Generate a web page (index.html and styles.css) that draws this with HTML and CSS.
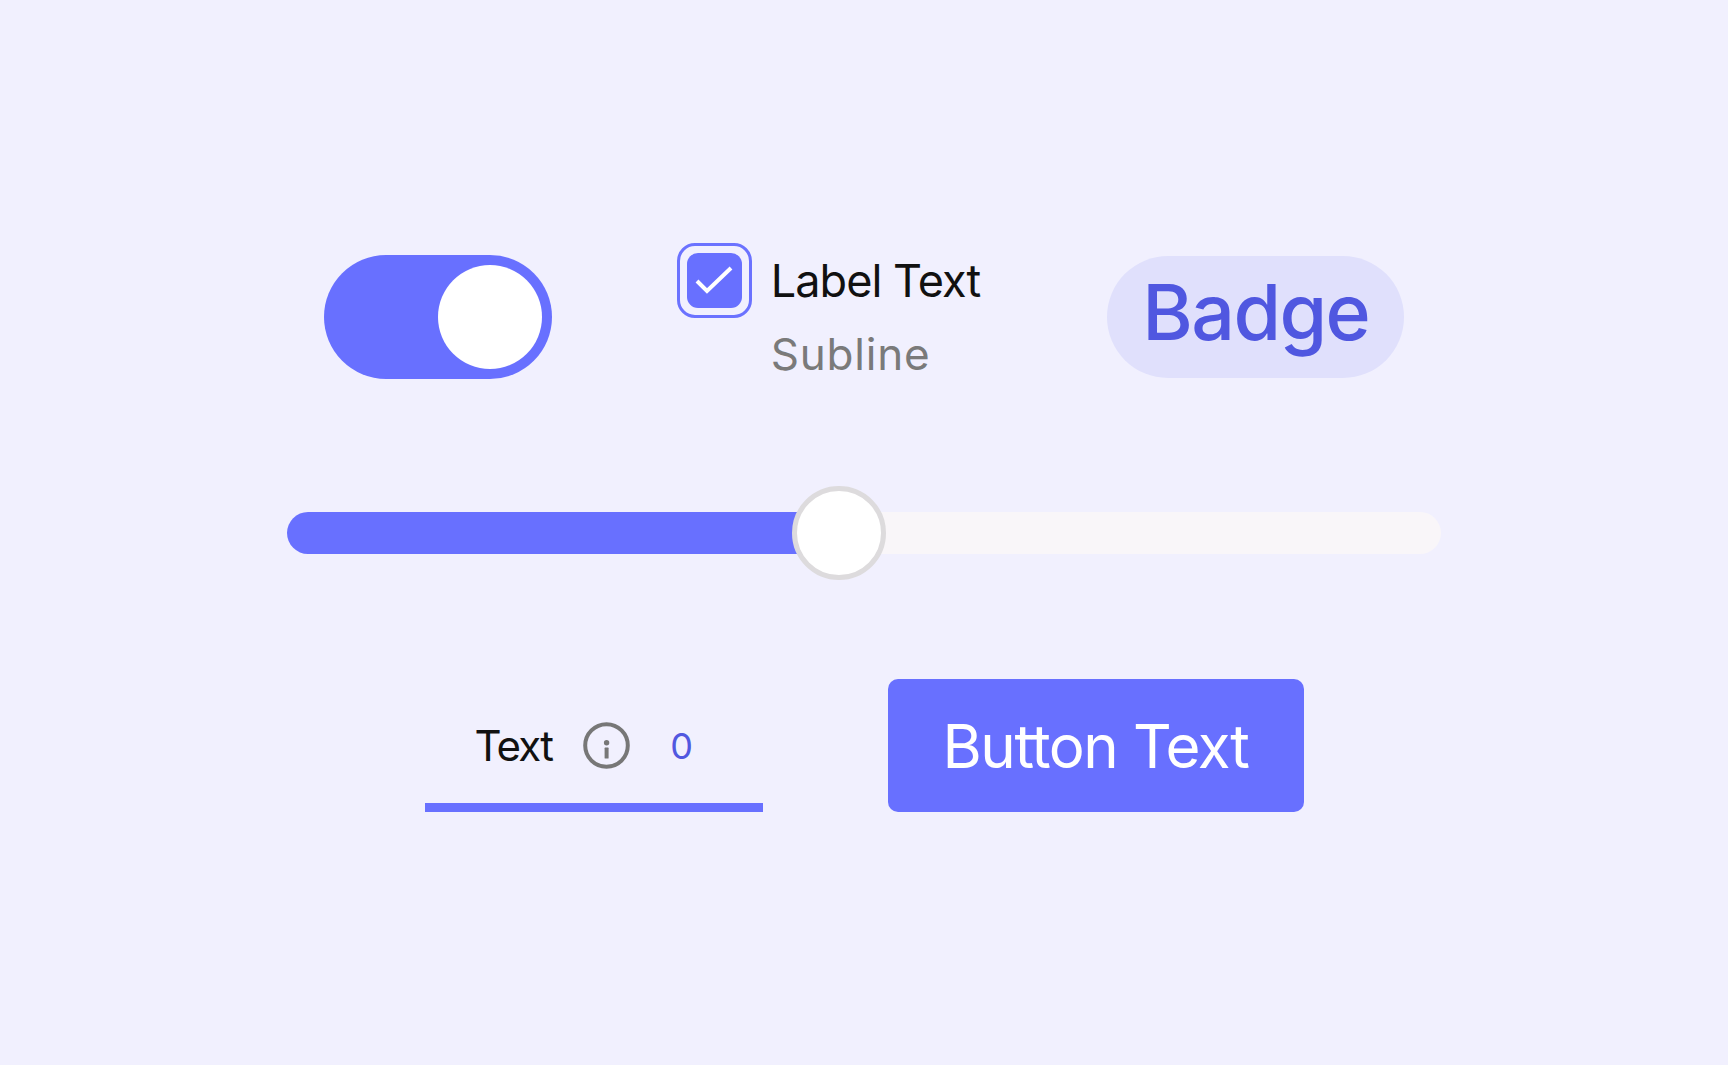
FILE: index.html
```html
<!DOCTYPE html>
<html lang="en">
<head>
<meta charset="utf-8">
<title>Components</title>
<link rel="stylesheet" href="styles.css">
</head>
<body>
<main class="stage">
  <section class="row row-top">
    <div class="toggle" role="switch" aria-checked="true">
      <span class="toggle-knob"></span>
    </div>
    <div class="check-group">
      <span class="checkbox">
        <span class="checkbox-box">
          <svg viewBox="0 0 55 55" width="55" height="55" aria-hidden="true">
            <polyline points="10,28 20,38 44,15" fill="none" stroke="#ffffff" stroke-width="4"/>
          </svg>
        </span>
      </span>
      <span class="check-label">Label Text</span>
      <span class="check-sub">Subline</span>
    </div>
    <div class="badge">Badge</div>
  </section>

  <section class="slider">
    <div class="slider-track">
      <div class="slider-fill" style="width: 47.8%"></div>
    </div>
    <span class="slider-thumb" style="left: 47.8%"></span>
  </section>

  <section class="row row-bottom">
    <div class="tab">
      <span class="tab-text">Text</span>
      <svg class="tab-info" viewBox="0 0 47 47" width="47" height="47" aria-hidden="true">
        <circle cx="23.5" cy="23.5" r="21.3" fill="none" stroke="#777777" stroke-width="4"/>
        <circle cx="23.6" cy="20.8" r="2.7" fill="#777777"/>
        <rect x="21.6" y="25.6" width="4" height="11" rx="0.6" fill="#777777"/>
      </svg>
      <span class="tab-count">0</span>
    </div>
    <button class="button" type="button">Button Text</button>
  </section>
</main>
</body>
</html>
```

FILE: styles.css
```css
html, body {
  margin: 0;
  padding: 0;
}

body {
  background: #f1f0fe;
  font-family: Inter, "Liberation Sans", sans-serif;
  width: 1728px;
  height: 1065px;
  overflow: hidden;
}

.stage {
  display: flex;
  flex-direction: column;
  align-items: center;
  padding-top: 243px;
}

.row {
  display: flex;
  align-items: center;
}

/* ---------- top row ---------- */
.row-top {
  gap: 125px;
}

.toggle {
  width: 228px;
  height: 124px;
  box-sizing: border-box;
  padding: 10px;
  border-radius: 62px;
  background: #6870ff;
  display: flex;
  justify-content: flex-end;
  align-items: center;
}

.toggle-knob {
  width: 104px;
  height: 104px;
  border-radius: 50%;
  background: #ffffff;
}

.check-group {
  display: grid;
  grid-template-columns: 75px auto;
  grid-template-rows: 75px 72px;
  column-gap: 19px;
  align-items: center;
  margin-right: 2px;
}

.checkbox {
  width: 75px;
  height: 75px;
  box-sizing: border-box;
  border: 3px solid #6b72ff;
  border-radius: 18px;
  padding: 7px;
  display: flex;
}

.checkbox-box {
  width: 55px;
  height: 55px;
  border-radius: 11px;
  background: #6870ff;
  display: block;
}

.checkbox-box svg {
  display: block;
}

.check-label {
  font-size: 45px;
  line-height: 75px;
  color: #111111;
  letter-spacing: -0.95px;
  white-space: nowrap;
}

.check-sub {
  grid-column: 2;
  grid-row: 2;
  font-size: 44px;
  line-height: 72px;
  color: #7a7a7a;
  letter-spacing: 0.8px;
  align-self: start;
}

.badge {
  width: 297px;
  height: 122px;
  border-radius: 61px;
  background: #e0e0fc;
  color: #5057e0;
  font-size: 77px;
  font-weight: 500;
  letter-spacing: -1.6px;
  display: flex;
  align-items: center;
  justify-content: center;
  padding: 0 0 10px 0;
  box-sizing: border-box;
}

/* ---------- slider ---------- */
.slider {
  position: relative;
  width: 1154px;
  height: 94px;
  margin-top: 96px;
  display: flex;
  align-items: center;
}

.slider-track {
  width: 100%;
  height: 42px;
  border-radius: 21px;
  background: #f9f6f9;
  overflow: hidden;
}

.slider-fill {
  height: 100%;
  background: #6870ff;
}

.slider-thumb {
  position: absolute;
  top: 0;
  width: 94px;
  height: 94px;
  margin-left: -47px;
  box-sizing: border-box;
  border: 5px solid #dddbdd;
  border-radius: 50%;
  background: #ffffff;
}

/* ---------- bottom row ---------- */
.row-bottom {
  margin-top: 99px;
  gap: 125px;
  align-items: flex-end;
}

.tab {
  width: 338px;
  height: 133px;
  box-sizing: border-box;
  border-bottom: 9px solid #6870ff;
  padding: 9px 0 0 50px;
  display: flex;
  align-items: center;
}

.tab-text {
  font-size: 42px;
  color: #111111;
  letter-spacing: -1.8px;
}

.tab-info {
  display: block;
  margin-left: 31px;
}

.tab-count {
  margin-left: 40px;
  font-size: 36px;
  color: #5158e0;
}

.button {
  width: 416px;
  height: 133px;
  border: none;
  border-radius: 10px;
  background: #6870ff;
  color: #ffffff;
  font-family: Inter, "Liberation Sans", sans-serif;
  font-size: 60px;
  letter-spacing: -1.4px;
  display: flex;
  align-items: center;
  justify-content: center;
  padding: 0;
  cursor: pointer;
}
```
